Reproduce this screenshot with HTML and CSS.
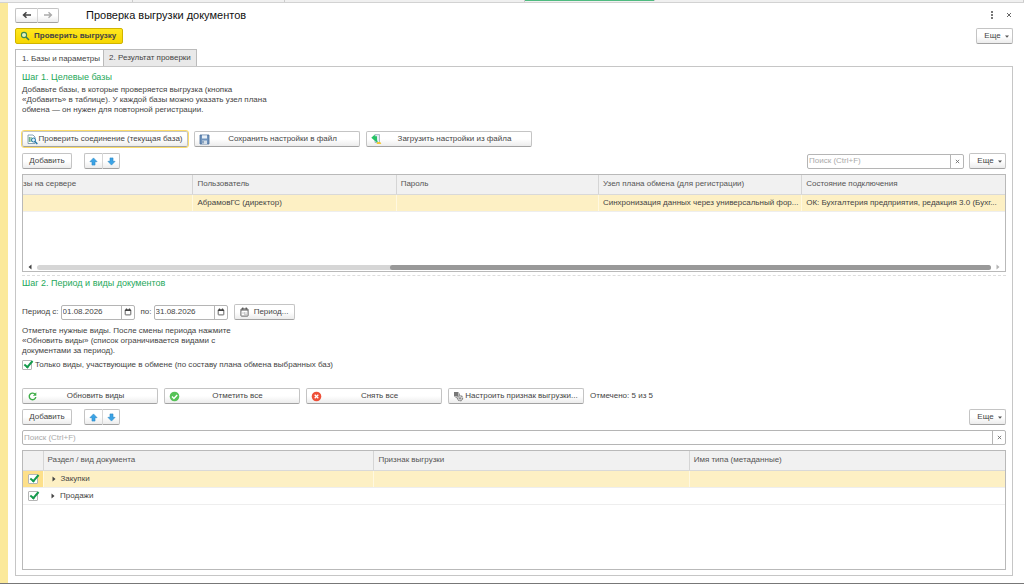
FILE: index.html
```html
<!DOCTYPE html>
<html lang="ru">
<head>
    <meta charset="UTF-8">
    <meta name="viewport" content="width=device-width, initial-scale=1.0">
    <title>Проверка выгрузки документов</title>
    <link rel="stylesheet" href="styles.css">
</head>
<body>
    <!-- shared icons -->
    <svg class="sprite" aria-hidden="true">
        <symbol id="i-up" viewBox="0 0 10 10"><path d="M5 1 L9 5.200 H6.700 V9 H3.300 V5.200 H1 Z" fill="#3aa3e6" stroke="#2584c2" stroke-width=".6"/></symbol>
        <symbol id="i-down" viewBox="0 0 10 10"><path d="M5 9 L9 4.800 H6.700 V1 H3.300 V4.800 H1 Z" fill="#3aa3e6" stroke="#2584c2" stroke-width=".6"/></symbol>
        <symbol id="i-cross" viewBox="0 0 6 6"><path d="M1 1 L5 5 M5 1 L1 5" stroke="#666" stroke-width="1" fill="none"/></symbol>
        <symbol id="i-caret" viewBox="0 0 4 3"><path d="M0 .5 H4 L2 2.800 Z" fill="#555"/></symbol>
        <symbol id="i-cal" viewBox="0 0 8 8"><rect x="1.200" y="1.700" width="5.600" height="5.200" rx=".5" fill="#fff" stroke="#555" stroke-width=".9"/><path d="M1 2.400 H7 M2.500 .6 V2 M5.500 .6 V2" stroke="#444" stroke-width="1.200"/></symbol>
        <symbol id="i-right" viewBox="0 0 4 6"><path d="M.5 .5 L3.500 3 L.5 5.500 Z" fill="#444"/></symbol>
    </svg>

    <div class="tabstrip">
        <span class="strip-tab"></span>
        <span class="strip-tab"></span>
        <span class="strip-tab"></span>
        <span class="strip-tab active"></span>
        <span class="strip-tab"></span>
    </div>

    <main class="window">
        <header class="titlebar">
            <div class="btn-group">
                <button class="btn" aria-label="Назад"><svg width="10" height="8" viewBox="0 0 10 8"><path d="M9 4 H2 M4.500 1.200 L1.500 4 L4.500 6.800" fill="none" stroke="#444" stroke-width="1.500"/></svg></button>
                <button class="btn" aria-label="Вперед"><svg width="10" height="8" viewBox="0 0 10 8"><path d="M1 4 H8 M5.500 1.200 L8.500 4 L5.500 6.800" fill="none" stroke="#aaa" stroke-width="1.300"/></svg></button>
            </div>
            <h1>Проверка выгрузки документов</h1>
            <button class="plain" aria-label="Меню"><svg width="4" height="8" viewBox="0 0 4 8"><path d="M1 0h2v2H1z M1 3h2v2H1z M1 6h2v2H1z" fill="#777"/></svg></button>
            <button class="plain" aria-label="Закрыть"><svg width="6" height="6"><use href="#i-cross"/></svg></button>
        </header>

        <div class="toolbar main-bar">
            <button class="btn primary">
                <svg width="10" height="10" viewBox="0 0 10 10"><circle cx="4" cy="4" r="2.600" fill="#e3f2c0" stroke="#3c8a50" stroke-width="1.100"/><path d="M6 6 L9 9" stroke="#3c7a50" stroke-width="1.600"/></svg>
                Проверить выгрузку
            </button>
            <button class="btn more">Еще <svg width="4" height="3"><use href="#i-caret"/></svg></button>
        </div>

        <div class="tabs" role="tablist">
            <button class="tab active" role="tab" aria-selected="true">1. Базы и параметры</button>
            <button class="tab" role="tab" aria-selected="false">2. Результат проверки</button>
        </div>

        <div class="page">
            <!-- Шаг 1 -->
            <section class="step">
                <h2>Шаг 1. Целевые базы</h2>
                <p class="hint">Добавьте базы, в которые проверяется выгрузка (кнопка «Добавить» в таблице). У каждой базы можно указать узел плана обмена — он нужен для повторной регистрации.</p>

                <div class="toolbar actions">
                    <button class="btn wide focused">
                        <svg width="11" height="11" viewBox="0 0 11 11"><path d="M1 1 H6 L8 3 V9.500 H1 Z" fill="#fff" stroke="#6d8ba5" stroke-width=".8"/><path d="M2.300 3 V8 M4 3 V8" stroke="#53a06b" stroke-width="1"/><circle cx="6.500" cy="6" r="2" fill="#dff1fb" stroke="#2878a8"/><path d="M8 7.500 L10.300 10" stroke="#2878a8" stroke-width="1.400"/></svg>
                        <span>Проверить соединение (текущая база)</span>
                    </button>
                    <button class="btn wide">
                        <svg width="11" height="11" viewBox="0 0 11 11"><path d="M1 1 H10 V10 H1 Z" fill="#6f93bd" stroke="#4d7099" stroke-width=".8"/><path d="M3 1.300 H8 V4.500 H3 Z" fill="#e9f0f7"/><path d="M3 6.500 H8 V10 H3 Z" fill="#d5dfe9"/><path d="M4 7 V9.500" stroke="#4d7099"/></svg>
                        <span>Сохранить настройки в файл</span>
                    </button>
                    <button class="btn wide">
                        <svg width="11" height="11" viewBox="0 0 11 11"><path d="M4 .6 H8.500 V8.500 H4 Z" fill="#e5eef4" stroke="#8fa4b3" stroke-width=".7"/><path d="M.3 3.800 L3.800 .6 V2.300 H6 V5.200 Q6 6.800 7 8.200 Q3.600 8 3.300 5.300 L3.800 5.300 V6.800 Z" fill="#27c266"/><path d="M5.500 9.900 L6.300 8 H9.300 L10.300 9.900 Z" fill="#f1c936"/></svg>
                        <span>Загрузить настройки из файла</span>
                    </button>
                </div>

                <div class="toolbar commands first">
                    <button class="btn add">Добавить</button>
                    <div class="btn-group small">
                        <button class="btn" aria-label="Вверх"><svg width="9" height="9"><use href="#i-up"/></svg></button>
                        <button class="btn" aria-label="Вниз"><svg width="9" height="9"><use href="#i-down"/></svg></button>
                    </div>
                    <div class="field search">
                        <input type="text" placeholder="Поиск (Ctrl+F)" aria-label="Поиск баз">
                        <button aria-label="Очистить"><svg width="5" height="5"><use href="#i-cross"/></svg></button>
                    </div>
                    <button class="btn more">Еще <svg width="4" height="3"><use href="#i-caret"/></svg></button>
                </div>

                <div class="grid bases">
                    <table>
                        <colgroup><col class="w-server"><col class="w-user"><col class="w-pass"><col class="w-node"><col></colgroup>
                        <thead>
                            <tr>
                                <th class="cut"><span>зы на сервере</span></th>
                                <th>Пользователь</th>
                                <th>Пароль</th>
                                <th>Узел плана обмена (для регистрации)</th>
                                <th>Состояние подключения</th>
                            </tr>
                        </thead>
                        <tbody>
                            <tr class="selected">
                                <td></td>
                                <td>АбрамовГС (директор)</td>
                                <td></td>
                                <td>Синхронизация данных через универсальный фор...</td>
                                <td>ОК: Бухгалтерия предприятия, редакция 3.0 (Бухг...</td>
                            </tr>
                        </tbody>
                    </table>
                    <div class="scroll">
                        <svg class="left" width="4" height="6"><use href="#i-right"/></svg>
                        <div class="track"><div class="thumb"></div></div>
                        <svg class="right" width="4" height="6"><use href="#i-right"/></svg>
                    </div>
                </div>
            </section>

            <!-- Шаг 2 -->
            <section class="step second">
                <h2>Шаг 2. Период и виды документов</h2>
                <div class="toolbar period">
                    <label for="from">Период с:</label>
                    <div class="field date">
                        <input type="text" id="from" value="01.08.2026">
                        <button aria-label="Выбрать дату начала"><svg width="8" height="8"><use href="#i-cal"/></svg></button>
                    </div>
                    <label for="to">по:</label>
                    <div class="field date">
                        <input type="text" id="to" value="31.08.2026">
                        <button aria-label="Выбрать дату окончания"><svg width="8" height="8"><use href="#i-cal"/></svg></button>
                    </div>
                    <button class="btn period-btn">
                        <svg width="9" height="10" viewBox="0 0 9 10"><rect x=".9" y="1.900" width="7.200" height="7.200" rx=".6" fill="#fff" stroke="#555" stroke-width=".9"/><path d="M1 3 H8" stroke="#555"/><path d="M2.800 .4 V2.500 M6.200 .4 V2.500" stroke="#444" stroke-width="1.100"/><path d="M2.500 6 H6.500 M4.500 7.600 H6.500" stroke="#888" stroke-width=".9" stroke-dasharray="1 .5"/></svg>
                        Период...
                    </button>
                </div>
                <p class="hint short">Отметьте нужные виды. После смены периода нажмите «Обновить виды» (список ограничивается видами с документами за период).</p>
                <label class="check"><input type="checkbox" checked>Только виды, участвующие в обмене (по составу плана обмена выбранных баз)</label>

                <div class="toolbar kinds">
                    <button class="btn wide">
                        <svg width="11" height="11" viewBox="0 0 11 11"><path d="M8.300 3.600 A3.300 3.300 0 1 0 8.800 6" fill="none" stroke="#3fae49" stroke-width="1.400"/><path d="M9.300 1.200 V4.800 H5.800 Z" fill="#3fae49"/></svg>
                        <span>Обновить виды</span>
                    </button>
                    <button class="btn wide">
                        <svg width="11" height="11" viewBox="0 0 11 11"><circle cx="5.500" cy="5.500" r="4.800" fill="#56c257"/><path d="M3 5.600 L4.900 7.400 L8.200 3.900" fill="none" stroke="#fff" stroke-width="1.400"/></svg>
                        <span>Отметить все</span>
                    </button>
                    <button class="btn wide">
                        <svg width="11" height="11" viewBox="0 0 11 11"><circle cx="5.500" cy="5.500" r="4.800" fill="#ee4f38"/><path d="M3.700 3.700 L7.300 7.300 M7.300 3.700 L3.700 7.300" stroke="#fff" stroke-width="1.300"/></svg>
                        <span>Снять все</span>
                    </button>
                    <button class="btn wide">
                        <svg width="11" height="11" viewBox="0 0 11 11"><path d="M1 1 H5.500 V5.500 H1 Z" fill="#777"/><path d="M2.500 6.500 H4 M6.500 2.500 V4" stroke="#999"/><circle cx="7" cy="7.200" r="2.500" fill="#ddd" stroke="#8a8a8a" stroke-width="1.400" stroke-dasharray="1.500 .6"/><circle cx="7" cy="7.200" r="1" fill="#888"/></svg>
                        <span>Настроить признак выгрузки...</span>
                    </button>
                    <span class="count">Отмечено: 5 из 5</span>
                </div>

                <div class="toolbar commands">
                    <button class="btn add">Добавить</button>
                    <div class="btn-group small">
                        <button class="btn" aria-label="Вверх"><svg width="9" height="9"><use href="#i-up"/></svg></button>
                        <button class="btn" aria-label="Вниз"><svg width="9" height="9"><use href="#i-down"/></svg></button>
                    </div>
                    <button class="btn more">Еще <svg width="4" height="3"><use href="#i-caret"/></svg></button>
                </div>
                <div class="field search full">
                    <input type="text" placeholder="Поиск (Ctrl+F)" aria-label="Поиск видов документов">
                    <button aria-label="Очистить"><svg width="5" height="5"><use href="#i-cross"/></svg></button>
                </div>

                <div class="grid types">
                    <table>
                        <colgroup><col class="w-check"><col class="w-kind"><col class="w-flag"><col></colgroup>
                        <thead>
                            <tr>
                                <th></th>
                                <th>Раздел / вид документа</th>
                                <th>Признак выгрузки</th>
                                <th>Имя типа (метаданные)</th>
                            </tr>
                        </thead>
                        <tbody>
                            <tr class="selected">
                                <td class="mark"><input type="checkbox" checked aria-label="Закупки"></td>
                                <td><svg class="expand" width="4" height="6"><use href="#i-right"/></svg>Закупки</td>
                                <td></td>
                                <td></td>
                            </tr>
                            <tr>
                                <td class="mark"><input type="checkbox" checked aria-label="Продажи"></td>
                                <td><svg class="expand" width="4" height="6"><use href="#i-right"/></svg>Продажи</td>
                                <td></td>
                                <td></td>
                            </tr>
                        </tbody>
                    </table>
                </div>
            </section>
        </div>
    </main>
</body>
</html>
```
FILE: styles.css
```css
*, *::before {
    box-sizing: border-box;
}
body {
    margin: 0;
    min-height: 100vh;
    display: flex;
    flex-direction: column;
    border-bottom: 1px solid #777;
    background-color: #fff;
    font-family: "Liberation Sans", Arial, sans-serif;
    font-size: 8px;
    line-height: 10px;
    color: #444;
}
button, input {
    font: inherit;
    color: inherit;
}
svg {
    flex: none;
}
.sprite {
    position: absolute;
    width: 0;
    height: 0;
}

/* strip of open windows */
.tabstrip {
    display: grid;
    grid-template-columns: 133fr 152fr 240fr 130fr 369fr;
    height: 3px;
    background-color: #f0f0f0;
    border-bottom: 1px solid #d2d2d2;
}
.strip-tab {
    border-right: 1px solid #ccc;
}
.strip-tab.active {
    height: 1px;
    background-color: #4fbb80;
}

.window {
    flex: 1;
    display: flex;
    flex-direction: column;
    padding: 4px 11px 7px 7px;
    border-left: 8px solid #fbe99a;
}
.titlebar {
    display: flex;
    align-items: center;
    height: 16px;
    margin-right: -4px;
}
.titlebar h1 {
    flex: 1;
    margin: 0 0 0 27px;
    font-size: 11px;
    line-height: 14px;
    font-weight: normal;
    color: #111;
}
.plain {
    display: flex;
    justify-content: center;
    width: 17px;
    padding: 0;
    border: none;
    background: none;
}

/* buttons */
.btn {
    display: flex;
    align-items: center;
    justify-content: center;
    height: 16px;
    padding: 0 6px;
    border: 1px solid #c4c4c4;
    border-bottom-color: #a2a2a2;
    border-radius: 2px;
    background: linear-gradient(#fff 50%, #ececec);
    white-space: nowrap;
}
.btn-group {
    display: flex;
}
.btn-group .btn {
    width: 22px;
    padding: 0;
    height: 15px;
}
.btn-group .btn:first-child {
    border-radius: 2px 0 0 2px;
    border-right: none;
}
.btn-group .btn:last-child {
    border-radius: 0 2px 2px 0;
    border-left-color: #d6d6d6;
}
.btn-group.small .btn {
    width: 18px;
    height: 16px;
}
.btn.primary {
    gap: 4px;
    padding: 0 6px 0 4px;
    border-color: #d0b400;
    background: linear-gradient(#ffe71f, #f6d600);
    font-weight: bold;
}
.btn.more {
    gap: 4px;
    width: 37px;
    margin-left: auto;
    padding: 0 2px 0 6px;
}
.btn.add {
    width: 50px;
}
.btn.wide {
    padding: 0 4px;
}
.btn.wide span {
    flex: 1;
    text-align: center;
}
.focused {
    outline: 1px solid #fbdc6a;
}

.toolbar {
    display: flex;
    align-items: center;
}
.main-bar {
    margin-top: 5px;
}

/* tabs */
.tabs {
    display: flex;
    align-items: flex-start;
    margin-top: 5px;
}
.tab {
    height: 17px;
    padding: 0 5px;
    border: 1px solid #bbb;
    border-bottom: none;
    background-color: #e9e9e9;
}
.tab.active {
    height: 18px;
    margin-bottom: -1px;
    padding: 0 3px 0 6px;
    border-right: none;
    background-color: #fff;
}
.page {
    flex: 1;
    display: flex;
    flex-direction: column;
    padding: 4px 6px 5px;
    border: 1px solid #c6c6c6;
}
.step h2 {
    margin: 0;
    font-size: 9px;
    line-height: 12px;
    font-weight: normal;
    color: #25a85a;
}
.hint {
    width: 250px;
    margin: 2px 0 0;
}
.hint.short {
    width: 214px;
    margin-top: 6px;
}
.actions {
    gap: 6px;
    margin-top: 16px;
}
.actions .btn {
    width: 166px;
}
.commands {
    margin-top: 5px;
}
.commands.first {
    margin-top: 6px;
}
.commands .btn-group {
    margin-left: 12px;
}
.commands .search {
    width: 157px;
    margin-left: auto;
}
.commands .search + .more {
    margin-left: 5px;
}

/* text boxes with a button inside */
.field {
    display: flex;
    height: 15px;
    border: 1px solid #b5b5b5;
    border-radius: 2px;
    background-color: #fff;
}
.field input {
    flex: 1;
    min-width: 0;
    padding: 0 1px;
    border: none;
    background: none;
    outline: none;
}
.field input::placeholder {
    color: #aaa;
}
.field button {
    display: flex;
    align-items: center;
    justify-content: center;
    width: 13px;
    padding: 0;
    border: none;
    border-left: 1px solid #b5b5b5;
    background: none;
}
.field.full {
    margin-top: 5px;
}

/* tables */
.grid {
    display: flex;
    flex-direction: column;
    margin-top: 5px;
    border: 1px solid #b9b9b9;
}
.grid table {
    width: 100%;
    table-layout: fixed;
    border-collapse: collapse;
}
.grid th, .grid td {
    height: 17px;
    padding: 0 2px 0 4px;
    overflow: hidden;
    text-align: left;
    text-overflow: ellipsis;
    white-space: nowrap;
    font-weight: normal;
    border-bottom: 1px solid #eee;
}
.grid th {
    height: 19px;
    background-color: #f1f1f1;
    color: #555;
    border-bottom-color: #d9d9d9;
}
.grid th + th {
    border-left: 1px solid #d5d5d5;
}
.grid .selected td {
    background-color: #fdf0c4;
}
.grid .selected td + td {
    border-left: 1px solid #fff8e0;
}
.grid.bases td {
    padding-right: 0;
}
.bases {
    height: 98px;
}
.w-server {
    width: 17.3%;
}
.w-user {
    width: 20.7%;
}
.w-pass {
    width: 20.6%;
}
.w-node {
    width: 20.7%;
}
.grid th.cut {
    padding-left: 0;
}
.scroll {
    display: flex;
    align-items: center;
    gap: 5px;
    margin-top: auto;
    padding: 1px 5px;
}
.scroll .left {
    transform: rotate(180deg);
}
.scroll .right {
    opacity: .4;
}
.track {
    flex: 1;
    height: 5px;
    border-radius: 3px;
    background-color: #d6d6d6;
}
.thumb {
    width: 63%;
    height: 5px;
    margin-left: auto;
    border-radius: 3px;
    background-color: #999;
}

/* step 2 */
.second {
    flex: 1;
    display: flex;
    flex-direction: column;
    margin-top: 3px;
    padding-top: 1px;
    border-top: 1px dashed #ddd;
}
.period {
    margin-top: 15px;
}
.date {
    width: 74px;
    margin: 0 6px 0 2px;
}
.period-btn {
    gap: 5px;
    width: 61px;
}
.check {
    display: flex;
    align-items: center;
    gap: 3px;
    margin-top: 4px;
}
input[type="checkbox"] {
    appearance: none;
    width: 10px;
    height: 10px;
    margin: 0;
    border: 1px solid #b5b5b5;
    border-radius: 1px;
    background-color: #fff;
}
input[type="checkbox"]:checked::before {
    content: "";
    display: block;
    width: 5px;
    height: 9px;
    margin: -2px 0 0 3px;
    border: solid #149a4c;
    border-width: 0 2px 2px 0;
    transform: rotate(40deg);
}
.kinds {
    gap: 6px;
    margin-top: 18px;
}
.kinds .btn {
    width: 136px;
}
.types {
    flex: 1;
}
.w-check {
    width: 20px;
}
.w-kind {
    width: 33.7%;
}
.w-flag {
    width: 32.1%;
}
.grid td.mark {
    padding: 0 5px;
}
.grid .selected td.mark {
    background-color: #fde08a;
}
.mark input {
    display: block;
}
.expand {
    margin: 0 5px 0 4px;
    vertical-align: -1px;
}
```
